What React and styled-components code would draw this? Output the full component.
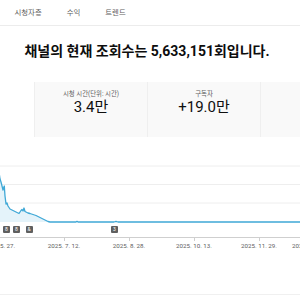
import React from "react";
import styled, { createGlobalStyle } from "styled-components";

const Global = createGlobalStyle`
  html, body { margin: 0; padding: 0; background: #fff; }
  body {
    width: 300px; height: 300px; overflow: hidden;
    font-family: Roboto, "Noto Sans CJK KR", sans-serif;
    color: #0f0f0f;
  }
`;

const Page = styled.div`
  width: 300px;
  height: 300px;
  overflow: hidden;
  display: flex;
  flex-direction: column;
`;

const TabBar = styled.nav`
  display: flex;
  height: 25px;
  padding-left: 2px;
  border-bottom: 1px solid #ececec;
`;

const Tab = styled.div`
  padding: 0 12.5px;
  font-size: 7.4px;
  line-height: 25px;
  color: #606060;
  white-space: nowrap;
`;

const Content = styled.div`
  padding-right: 6px;
`;

const Heading = styled.h1`
  margin: 16px 0 22px;
  font-size: 14px;
  line-height: 18px;
  font-weight: 700;
  text-align: center;
  color: #0d0d0d;
  white-space: nowrap;
`;

const CardRow = styled.div`
  display: flex;
  justify-content: center;
  height: 55px;
`;

const Card = styled.div`
  flex: 0 0 113px;
  box-sizing: border-box;
  background: ${(p) => (p.$active ? "#ffffff" : "#f9f9f9")};
  border-left: 1px solid ${(p) => (p.$first ? "transparent" : "#efefef")};
  display: flex;
  flex-direction: column;
  align-items: center;
  padding-top: 8px;
`;

const CardLabel = styled.div`
  font-size: 6.4px;
  line-height: 8px;
  color: ${(p) => p.$accent || "#606060"};
  white-space: nowrap;
`;

const CardValue = styled.div`
  font-size: 15px;
  line-height: 18px;
  color: #0f0f0f;
  white-space: nowrap;
`;

const ChartWrap = styled.div`
  position: relative;
  height: 104px;
`;

const ChartSvg = styled.svg`
  display: block;
  width: 300px;
  height: 104px;
`;

const Badge = styled.div`
  position: absolute;
  top: 89px;
  width: 7px;
  height: 7px;
  border-radius: 1px;
  background: #5f5f5f;
  color: #fff;
  font-size: 5px;
  line-height: 7px;
  text-align: center;
`;

const AxisLabels = styled.div`
  position: relative;
  height: 10px;
`;

const AxisLabel = styled.span`
  position: absolute;
  top: 0;
  font-size: 6.2px;
  line-height: 10px;
  color: #606060;
  white-space: nowrap;
  transform: ${(p) => (p.$left ? "none" : "translateX(-50%)")};
`;

const Footer = styled.div`
  margin-top: 43px;
  border-bottom: 1px solid #f0f0f0;
`;

const linePts = [
  [-4, 160], [-1, 172], [0, 179], [1, 182], [2, 186], [3, 190], [3.6, 188], [4.3, 186],
  [5, 196], [6, 204], [7, 203], [8, 206], [10, 209], [12, 210], [14, 211], [16, 212],
  [18, 213], [19, 213.5], [21, 210.5], [22, 209.5], [23, 211], [24, 208], [25, 211.5],
  [26, 212], [28, 213], [30, 213.5], [33, 214.5], [36, 215.5], [38, 216.5], [40, 217.5],
  [42, 218.5], [44, 219.5], [46, 220.5], [48, 221.5], [50, 222], [76, 222], [77, 221.3],
  [78, 222], [114, 222], [116, 221.3], [118, 222], [302, 222],
];

const linePath = linePts.map((p, i) => `${i ? "L" : "M"}${p[0]} ${p[1]}`).join(" ");
const fillPath = `${linePath} L302 222 L-4 222 Z`;

const grid = [166, 184.5, 203];
const ticks = [-1, 64, 129, 194, 259];
const labels = [
  { x: -1, t: "2025. 5. 27." },
  { x: 64, t: "2025. 7. 12." },
  { x: 129, t: "2025. 8. 28." },
  { x: 194, t: "2025. 10. 13." },
  { x: 259, t: "2025. 11. 29." },
];
const badges = [
  { x: 3, t: "8" },
  { x: 13, t: "8" },
  { x: 25.5, t: "&" },
  { x: 111, t: "3" },
];

export default function App() {
  return (
    <Page>
      <Global />
      <TabBar>
        <Tab>시청자층</Tab>
        <Tab>수익</Tab>
        <Tab>트렌드</Tab>
      </TabBar>
      <Content>
        <Heading>채널의 현재 조회수는 5,633,151회입니다.</Heading>
        <CardRow>
          <Card $active $first>
            <CardLabel>조회수</CardLabel>
            <CardValue>563만</CardValue>
          </Card>
          <Card>
            <CardLabel>시청 시간(단위: 시간)</CardLabel>
            <CardValue>3.4만</CardValue>
          </Card>
          <Card>
            <CardLabel>구독자</CardLabel>
            <CardValue>+19.0만</CardValue>
          </Card>
          <Card>
            <CardLabel $accent="#c77b30">예상 수익</CardLabel>
            <CardValue>₩0</CardValue>
          </Card>
        </CardRow>
      </Content>
      <ChartWrap>
        <ChartSvg viewBox="0 137 300 104">
          {grid.map((y) => (
            <line key={y} x1="0" x2="300" y1={y} y2={y} stroke="#eeeeee" strokeWidth="1" />
          ))}
          <path d={fillPath} fill="#e4f3fa" />
          <path d={linePath} fill="none" stroke="#3fa8d6" strokeWidth="1.3" strokeLinejoin="round" />
          <line x1="0" x2="300" y1="237.5" y2="237.5" stroke="#cfcfcf" strokeWidth="1" />
          {ticks.map((x) => (
            <line key={x} x1={x + 0.5} x2={x + 0.5} y1="237" y2="241" stroke="#cfcfcf" strokeWidth="1" />
          ))}
        </ChartSvg>
        {badges.map((b, i) => (
          <Badge key={i} style={{ left: b.x }}>{b.t}</Badge>
        ))}
      </ChartWrap>
      <AxisLabels>
        {labels.map((l) => (
          <AxisLabel key={l.t} style={{ left: l.x }}>{l.t}</AxisLabel>
        ))}
        <AxisLabel $left style={{ left: 292 }}>2026. 1. 14.</AxisLabel>
      </AxisLabels>
      <Footer />
    </Page>
  );
}
